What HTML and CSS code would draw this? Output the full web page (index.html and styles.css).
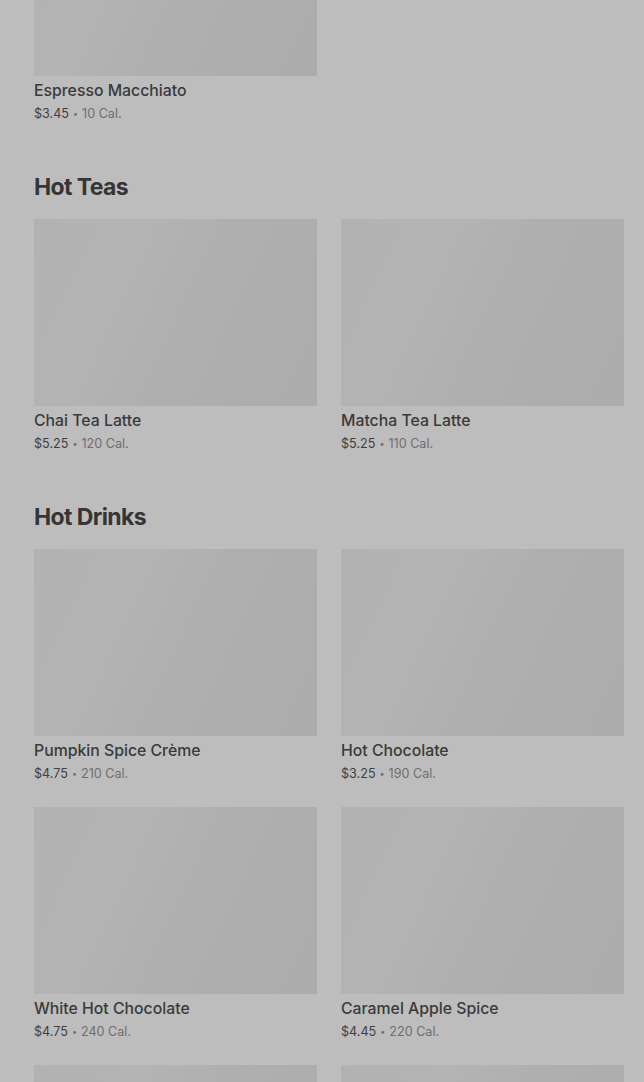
FILE: index.html
```html
<!DOCTYPE html>
<html>
<head>
<meta charset="utf-8">
<link rel="stylesheet" href="styles.css">
</head>
<body>
<main class="menu">
  <section class="section first">
    <div class="grid">
      <article class="item">
        <div class="thumb"></div>
        <div class="name">Espresso Macchiato</div>
        <div class="meta"><span class="price">$3.45</span><span class="dot">•</span><span class="cal">10 Cal.</span></div>
      </article>
    </div>
  </section>

  <section class="section">
    <h2 class="heading">Hot Teas</h2>
    <div class="grid">
      <article class="item">
        <div class="thumb"></div>
        <div class="name">Chai Tea Latte</div>
        <div class="meta"><span class="price">$5.25</span><span class="dot">•</span><span class="cal">120 Cal.</span></div>
      </article>
      <article class="item">
        <div class="thumb"></div>
        <div class="name">Matcha Tea Latte</div>
        <div class="meta"><span class="price">$5.25</span><span class="dot">•</span><span class="cal">110 Cal.</span></div>
      </article>
    </div>
  </section>

  <section class="section">
    <h2 class="heading">Hot Drinks</h2>
    <div class="grid">
      <article class="item">
        <div class="thumb"></div>
        <div class="name">Pumpkin Spice Crème</div>
        <div class="meta"><span class="price">$4.75</span><span class="dot">•</span><span class="cal">210 Cal.</span></div>
      </article>
      <article class="item">
        <div class="thumb"></div>
        <div class="name">Hot Chocolate</div>
        <div class="meta"><span class="price">$3.25</span><span class="dot">•</span><span class="cal">190 Cal.</span></div>
      </article>
      <article class="item">
        <div class="thumb"></div>
        <div class="name">White Hot Chocolate</div>
        <div class="meta"><span class="price">$4.75</span><span class="dot">•</span><span class="cal">240 Cal.</span></div>
      </article>
      <article class="item">
        <div class="thumb"></div>
        <div class="name">Caramel Apple Spice</div>
        <div class="meta"><span class="price">$4.45</span><span class="dot">•</span><span class="cal">220 Cal.</span></div>
      </article>
      <article class="item">
        <div class="thumb"></div>
      </article>
      <article class="item">
        <div class="thumb"></div>
      </article>
    </div>
  </section>
</main>
</body>
</html>
```

FILE: styles.css
```css
html, body {
  margin: 0;
  padding: 0;
  background: #bdbdbd;
  overflow: hidden;
  height: 1082px;
}

body {
  font-family: Inter, "Noto Sans", "Liberation Sans", sans-serif;
  color: #383838;
}

.menu {
  padding: 0 20px 0 34px;
  margin-top: -111px;
}

.section {
  margin-bottom: 49px;
}

.section.first {
  margin-bottom: 49px;
}

.heading {
  margin: 0 0 18px;
  font-size: 23px;
  line-height: 28px;
  font-weight: 700;
  letter-spacing: -0.6px;
  color: #353535;
}

.grid {
  display: grid;
  grid-template-columns: 283px 283px;
  column-gap: 24px;
  row-gap: 23px;
}

.thumb {
  height: 187px;
  background: linear-gradient(115deg, #b2b2b2 0%, #b4b4b4 30%, #afafaf 55%, #acacac 100%);
}

.name {
  margin-top: 5px;
  font-size: 15.8px;
  line-height: 20px;
  font-weight: 500;
  color: #3a3a3a;
}

.meta {
  margin-top: 3px;
  font-size: 12.6px;
  line-height: 20px;
  display: flex;
  align-items: center;
}

.price {
  color: #3f3f3f;
}

.dot {
  color: #6f6f6f;
  font-size: 9px;
  margin: 0 4px;
}

.cal {
  color: #6e6e6e;
}
```
